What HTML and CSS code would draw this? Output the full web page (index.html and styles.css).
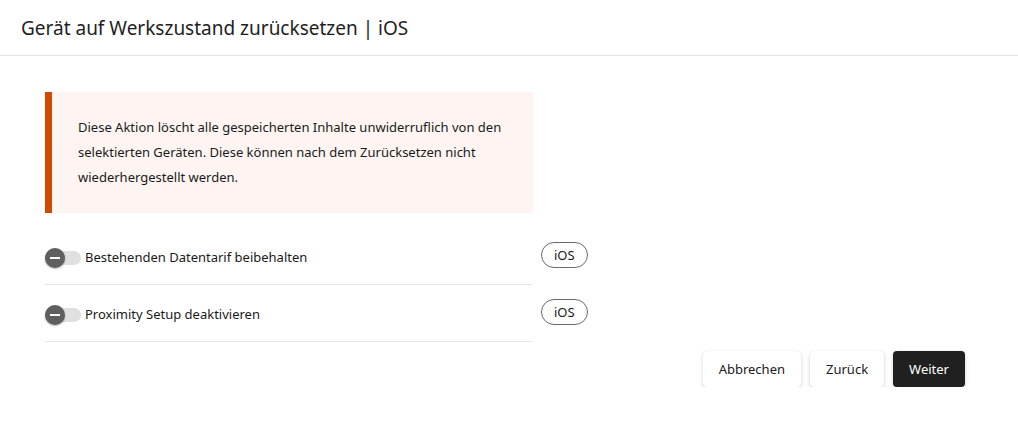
FILE: index.html
```html
<!DOCTYPE html>
<html lang="de">
<head>
<meta charset="utf-8">
<link rel="stylesheet" href="styles.css">
</head>
<body>
<header class="header">
  <h1 class="title">Gerät auf Werkszustand zurücksetzen | iOS</h1>
</header>
<main class="content">
  <div class="alert">
    <p>Diese Aktion löscht alle gespeicherten Inhalte unwiderruflich von den selektierten Geräten. Diese können nach dem Zurücksetzen nicht wiederhergestellt werden.</p>
  </div>
  <div class="options">
    <div class="option">
      <div class="option-main">
        <span class="toggle"><span class="knob"></span></span>
        <span class="label">Bestehenden Datentarif beibehalten</span>
      </div>
      <span class="chip">iOS</span>
    </div>
    <div class="option">
      <div class="option-main">
        <span class="toggle"><span class="knob"></span></span>
        <span class="label">Proximity Setup deaktivieren</span>
      </div>
      <span class="chip">iOS</span>
    </div>
  </div>
  <div class="actions">
    <button class="btn">Abbrechen</button>
    <button class="btn">Zurück</button>
    <button class="btn btn-primary">Weiter</button>
  </div>
</main>
</body>
</html>
```
FILE: styles.css
```css
* { box-sizing: border-box; }
html, body { margin: 0; padding: 0; background: #fff; }
body {
  font-family: "Noto Sans", "Open Sans", sans-serif;
  color: #1f1f1f;
  width: 1018px;
}
.header {
  height: 56px;
  border-bottom: 1px solid #e2e2e2;
  padding: 0 21px;
  display: flex;
  align-items: center;
}
.title {
  margin: 0;
  font-size: 19px;
  font-weight: 400;
  color: #1e1e1e;
}
.content {
  padding: 36px 53px 0 45px;
}
.alert {
  width: 488px;
  background: #fef5f2;
  border-left: 7px solid #d04a02;
  padding: 23px 26px 23px 26px;
}
.alert p {
  margin: 0;
  font-size: 13px;
  line-height: 25px;
  color: #1a1a1a;
}
.options {
  margin-top: 15px;
}
.option {
  display: flex;
  align-items: center;
}
.option-main {
  width: 488px;
  height: 57px;
  border-bottom: 1px solid #e6e6e6;
  display: flex;
  align-items: center;
}
.toggle {
  position: relative;
  width: 36px;
  height: 14px;
  border-radius: 7px;
  background: #e0e0e0;
  margin-top: 3px;
  flex: none;
}
.knob {
  position: absolute;
  left: 0;
  top: -3px;
  width: 20px;
  height: 20px;
  border-radius: 50%;
  background: #5f5f5f;
  box-shadow: 0 1px 2px rgba(0,0,0,0.3);
}
.knob::after {
  content: "";
  position: absolute;
  left: 5px;
  top: 9px;
  width: 10px;
  height: 2px;
  background: #fff;
}
.label {
  margin-left: 4px;
  margin-top: 2px;
  font-size: 13px;
  color: #1a1a1a;
}
.chip {
  margin-left: 8px;
  margin-top: -3px;
  height: 26px;
  padding: 0 12px;
  border: 1px solid #6a6a6a;
  border-radius: 13px;
  font-size: 13px;
  display: flex;
  align-items: center;
  color: #1a1a1a;
}
.actions {
  display: flex;
  justify-content: flex-end;
  gap: 9px;
  margin-top: 9px;
}
.btn {
  font-family: inherit;
  font-size: 13px;
  height: 36px;
  padding: 0 16px;
  border: none;
  border-radius: 4px;
  background: #fff;
  color: #1a1a1a;
  box-shadow: 0 2px 4px rgba(0,0,0,0.16), 0 0 1px rgba(0,0,0,0.12);
}
.btn-primary {
  background: #202020;
  color: #fff;
}
```
